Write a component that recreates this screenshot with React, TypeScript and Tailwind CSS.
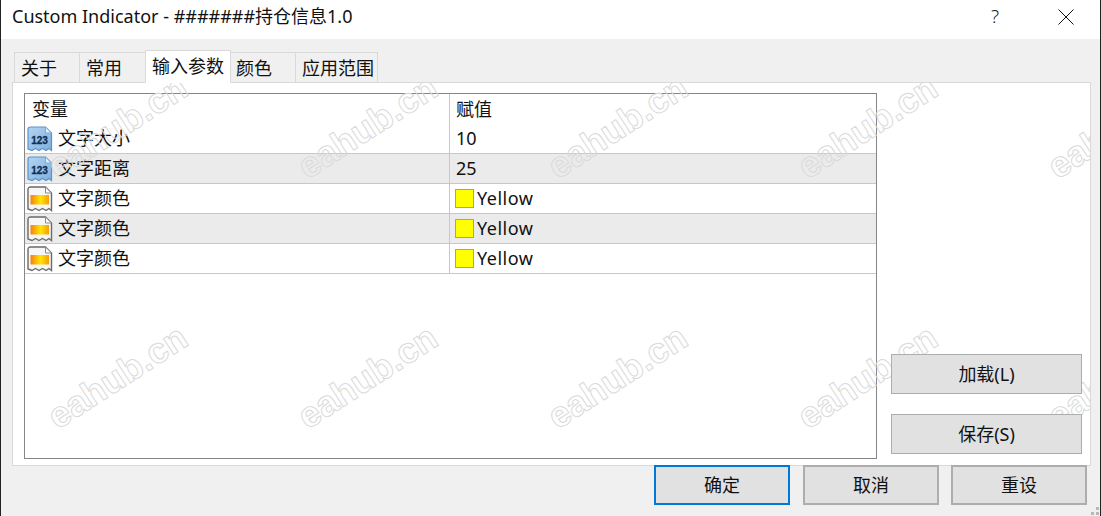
import React from 'react';

const FONT = "font-['Noto_Sans','Noto_Sans_CJK_SC',sans-serif]";

type Row = { name: string; value: string; kind: 'number' | 'color' };

const rows: Row[] = [
  { name: '文字大小', value: '10', kind: 'number' },
  { name: '文字距离', value: '25', kind: 'number' },
  { name: '文字颜色', value: 'Yellow', kind: 'color' },
  { name: '文字颜色', value: 'Yellow', kind: 'color' },
  { name: '文字颜色', value: 'Yellow', kind: 'color' },
];

const tabs = [
  { label: '关于', width: 'w-[66px] pl-[6px]' },
  { label: '常用', width: 'w-[67px] pl-[6px]' },
  { label: '输入参数', width: 'w-[86px] pl-[6px]', active: true },
  { label: '颜色', width: 'w-[66px] pl-[5px]' },
  { label: '应用范围', width: 'w-[83px] pl-[6px]' },
];

// start of each watermark, relative to the panel
const marks: [number, number][] = [];
[0, 250].forEach(y => {
  [0, 250, 500, 750, 1000].forEach(x => marks.push([x, y]));
});

const NumberIcon = () => (
  <svg width="26" height="26" viewBox="0 0 26 26" className="shrink-0">
    <defs>
      <linearGradient id="numFill" x1="0" y1="0" x2="1" y2="1">
        <stop offset="0" stopColor="#b4d4f0" />
        <stop offset="1" stopColor="#7fb0e0" />
      </linearGradient>
    </defs>
    <path
      d="M1 3.5 Q1 1 3.5 1 H18.5 L24.5 7 V24.5 L22 22.5 L19 24.5 L15.5 22.5 L12 24.5 L8.5 22.5 L5 24.5 L1 23 Z"
      fill="url(#numFill)"
      stroke="#5b93c9"
      strokeWidth="1.2"
    />
    <path d="M18.5 1 V7 H24.5 Z" fill="#e4f0fa" stroke="#7dabd6" strokeWidth="1" />
    <text x="12.6" y="17.5" textAnchor="middle" fontSize="10" fontWeight="700" fill="#0f2f57" stroke="#0f2f57" strokeWidth="0.3" fontFamily="Liberation Sans, sans-serif">
      123
    </text>
  </svg>
);

const ColorIcon = () => (
  <svg width="26" height="26" viewBox="0 0 26 26" className="shrink-0">
    <defs>
      <linearGradient id="colFill" x1="0" y1="0" x2="1" y2="0">
        <stop offset="0" stopColor="#f57f10" />
        <stop offset="0.55" stopColor="#ffe600" />
        <stop offset="1" stopColor="#f79a10" />
      </linearGradient>
    </defs>
    <path
      d="M1 3.5 Q1 1 3.5 1 H18.5 L24.5 7 V24.5 L22 22.5 L19 24.5 L15.5 22.5 L12 24.5 L8.5 22.5 L5 24.5 L1 23 Z"
      fill="#f6f6f6"
      stroke="#6a6a6a"
      strokeWidth="1.4"
    />
    <path d="M18.5 1 V7 H24.5 Z" fill="#ffffff" stroke="#8a8a8a" strokeWidth="1" />
    <rect x="3.5" y="9" width="18.5" height="9.5" fill="url(#colFill)" />
  </svg>
);

const Button = ({ label, className }: { label: string; className: string }) => (
  <button className={`relative z-20 h-10 bg-[#e1e1e1] text-[18px] text-[#111] flex items-center justify-center ${className}`}>
    {label}
  </button>
);

export default function App() {
  return (
    <div className={`${FONT} w-[1101px] h-[516px] relative overflow-hidden bg-[#f0f0f0] border-x border-[#222] text-[#111] text-[18px] leading-none flex flex-col`}>
      {/* title bar */}
      <div className="h-[39px] shrink-0 bg-white flex items-center pl-[11px] relative">
        <span className="mt-[-8px]">Custom Indicator - #######持仓信息1.0</span>
        <span className="absolute left-[990px] top-[7px] text-[19px] font-light text-[#222]">?</span>
        <svg width="16" height="16" viewBox="0 0 16 16" className="absolute left-[1057px] top-[9px]">
          <path d="M0.5 0.5 L15.5 15.5 M15.5 0.5 L0.5 15.5" stroke="#111" strokeWidth="1" fill="none" />
        </svg>
      </div>

      {/* tabs */}
      <div className="flex items-end h-[43px] shrink-0 pl-[13px] relative z-10">
        {tabs.map(t => (
          <div
            key={t.label}
            className={`${t.width} border border-[#d9d9d9] flex items-center ${
              t.active
                ? 'h-[33px] bg-white border-b-white pb-px mb-[-1px] -ml-px relative z-10'
                : 'h-[30px] bg-[#f0f0f0] border-b-0 -ml-px first:ml-0 pt-[1px]'
            }`}
          >
            {t.label}
          </div>
        ))}
      </div>

      {/* panel */}
      <div className="ml-[11px] w-[1079px] h-[384px] shrink-0 bg-white border border-[#d9d9d9] pl-[11px] pt-[10px] pb-[6px] flex relative overflow-hidden">
        <div className="w-[853px] h-[366px] border border-[#85858b] bg-white flex flex-col shrink-0">
          <div className="h-[30px] flex shrink-0">
            <div className="w-[425px] pl-[7px] flex items-center border-r border-[#c8c8c8]">变量</div>
            <div className="pl-[6px] flex items-center">赋值</div>
          </div>
          {rows.map((r, i) => (
            <div key={i} className={`h-[30px] flex shrink-0 border-b border-[#c8c8c8] ${i % 2 === 1 ? 'bg-[#ebebeb]' : 'bg-white'}`}>
              <div className="w-[425px] pl-[2px] flex items-center gap-[5px] border-r border-[#c8c8c8]">
                {r.kind === 'number' ? <NumberIcon /> : <ColorIcon />}
                <span className="pb-px">{r.name}</span>
              </div>
              <div className="pl-[5px] flex items-center">
                {r.kind === 'color' && <span className="w-[19px] h-[19px] bg-[#ffff00] border border-[#a0a0a0] mr-[3px]" />}
                <span className={r.kind === 'number' ? 'pl-px pb-px' : 'pb-px tracking-[0.5px]'}>{r.value}</span>
              </div>
            </div>
          ))}
        </div>
        <div className="ml-[14px] w-[191px] flex flex-col justify-end gap-5 pb-[5px]">
          <Button label="加载(L)" className="w-[191px] border border-[#adadad]" />
          <Button label="保存(S)" className="w-[191px] border border-[#adadad]" />
        </div>

        {/* watermark */}
        <div className="absolute inset-0 z-10 pointer-events-none overflow-hidden">
          {marks.map(([x, y]) => (
            <span
              key={`${x}-${y}`}
              className="absolute font-['Liberation_Sans',sans-serif] font-bold text-[36px] leading-none text-transparent [-webkit-text-stroke:1px_#dadada] origin-bottom-left -rotate-[33deg] whitespace-nowrap"
              style={{ left: 48 + x, top: 66 + y }}
            >
              eahub.cn
            </span>
          ))}
        </div>
      </div>

      {/* bottom buttons */}
      <div className="flex-1 flex pl-[653px] gap-[13px] -mt-px">
        <Button label="确定" className="w-[136px] border-2 border-[#0078d7]" />
        <Button label="取消" className="w-[136px] border-2 border-[#adadad]" />
        <Button label="重设" className="w-[136px] border-2 border-[#adadad] -ml-px" />
      </div>

      {/* size grip */}
      <svg width="10" height="10" viewBox="0 0 10 10" className="absolute right-0 bottom-0">
        <path d="M6 1h3v3H6zM1 6h3v3H1zM6 6h3v3H6z" fill="#b8b8b8" />
      </svg>
    </div>
  );
}
